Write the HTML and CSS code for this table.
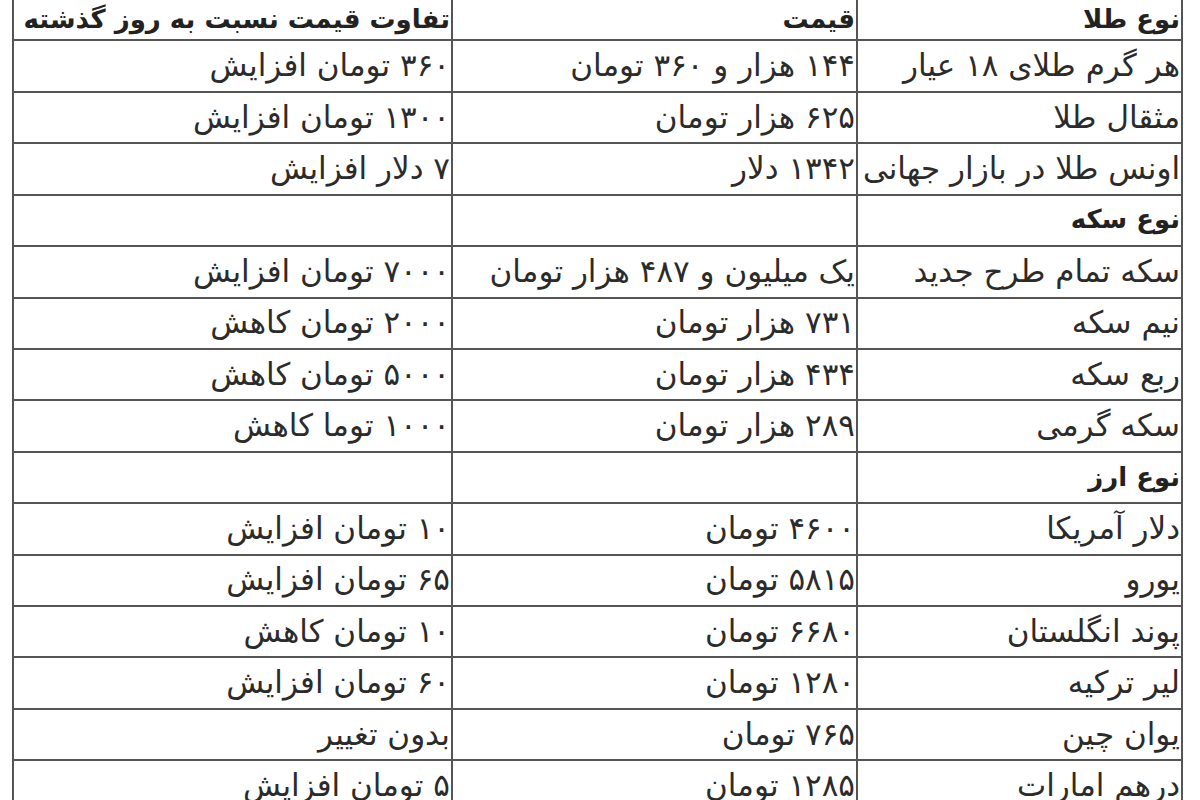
FILE: index.html
```html
<!DOCTYPE html>
<html lang="fa" dir="rtl">
<head>
<meta charset="utf-8">
<title>قیمت طلا، سکه و ارز</title>
<link rel="stylesheet" href="styles.css">
</head>
<body>
<table class="prices">
  <colgroup>
    <col class="c-name">
    <col class="c-price">
    <col class="c-diff">
  </colgroup>
  <tr class="head top"><td>نوع طلا</td><td>قیمت</td><td>تفاوت قیمت نسبت به روز گذشته</td></tr>
  <tr><td>هر گرم طلای ۱۸ عیار</td><td>۱۴۴ هزار و ۳۶۰ تومان</td><td>۳۶۰ تومان افزایش</td></tr>
  <tr><td>مثقال طلا</td><td>۶۲۵ هزار تومان</td><td>۱۳۰۰ تومان افزایش</td></tr>
  <tr><td>اونس طلا در بازار جهانی</td><td>۱۳۴۲ دلار</td><td>۷ دلار افزایش</td></tr>
  <tr class="head"><td>نوع سکه</td><td></td><td></td></tr>
  <tr><td>سکه تمام طرح جدید</td><td>یک میلیون و ۴۸۷ هزار تومان</td><td>۷۰۰۰ تومان افزایش</td></tr>
  <tr><td>نیم سکه</td><td>۷۳۱ هزار تومان</td><td>۲۰۰۰ تومان کاهش</td></tr>
  <tr><td>ربع سکه</td><td>۴۳۴ هزار تومان</td><td>۵۰۰۰ تومان کاهش</td></tr>
  <tr><td>سکه گرمی</td><td>۲۸۹ هزار تومان</td><td>۱۰۰۰ توما کاهش</td></tr>
  <tr class="head"><td>نوع ارز</td><td></td><td></td></tr>
  <tr><td>دلار آمریکا</td><td>۴۶۰۰ تومان</td><td>۱۰ تومان افزایش</td></tr>
  <tr><td>یورو</td><td>۵۸۱۵ تومان</td><td>۶۵ تومان افزایش</td></tr>
  <tr><td>پوند انگلستان</td><td>۶۶۸۰ تومان</td><td>۱۰ تومان کاهش</td></tr>
  <tr><td>لیر ترکیه</td><td>۱۲۸۰ تومان</td><td>۶۰ تومان افزایش</td></tr>
  <tr><td>یوان چین</td><td>۷۶۵ تومان</td><td>بدون تغییر</td></tr>
  <tr><td>درهم امارات</td><td>۱۲۸۵ تومان</td><td>۵ تومان افزایش</td></tr>
</table>
</body>
</html>
```
FILE: styles.css
```css
html, body {
  margin: 0;
  padding: 0;
  background: #ffffff;
}
body {
  overflow: hidden;
  height: 800px;
  font-family: "DejaVu Sans", "Noto Sans", sans-serif;
  color: #2b2b2b;
}
.prices {
  border-collapse: collapse;
  table-layout: fixed;
  width: 1169px;
  margin: -12px 17px 0 0;
  font-size: 31px;
  line-height: 40px;
}
.c-name { width: 325px; }
.c-price { width: 405px; }
.c-diff { width: 439px; }
.prices tr {
  height: 51.43px;
}
.prices td {
  border: 2px solid #555555;
  padding: 0 1px 2px 1px;
  text-align: right;
  vertical-align: middle;
  white-space: nowrap;
  overflow: hidden;
}
.head td {
  font-weight: bold;
  font-size: 26px;
  color: #222222;
}
.top td {
  vertical-align: bottom;
  padding-bottom: 3px;
  line-height: 34px;
}
```
